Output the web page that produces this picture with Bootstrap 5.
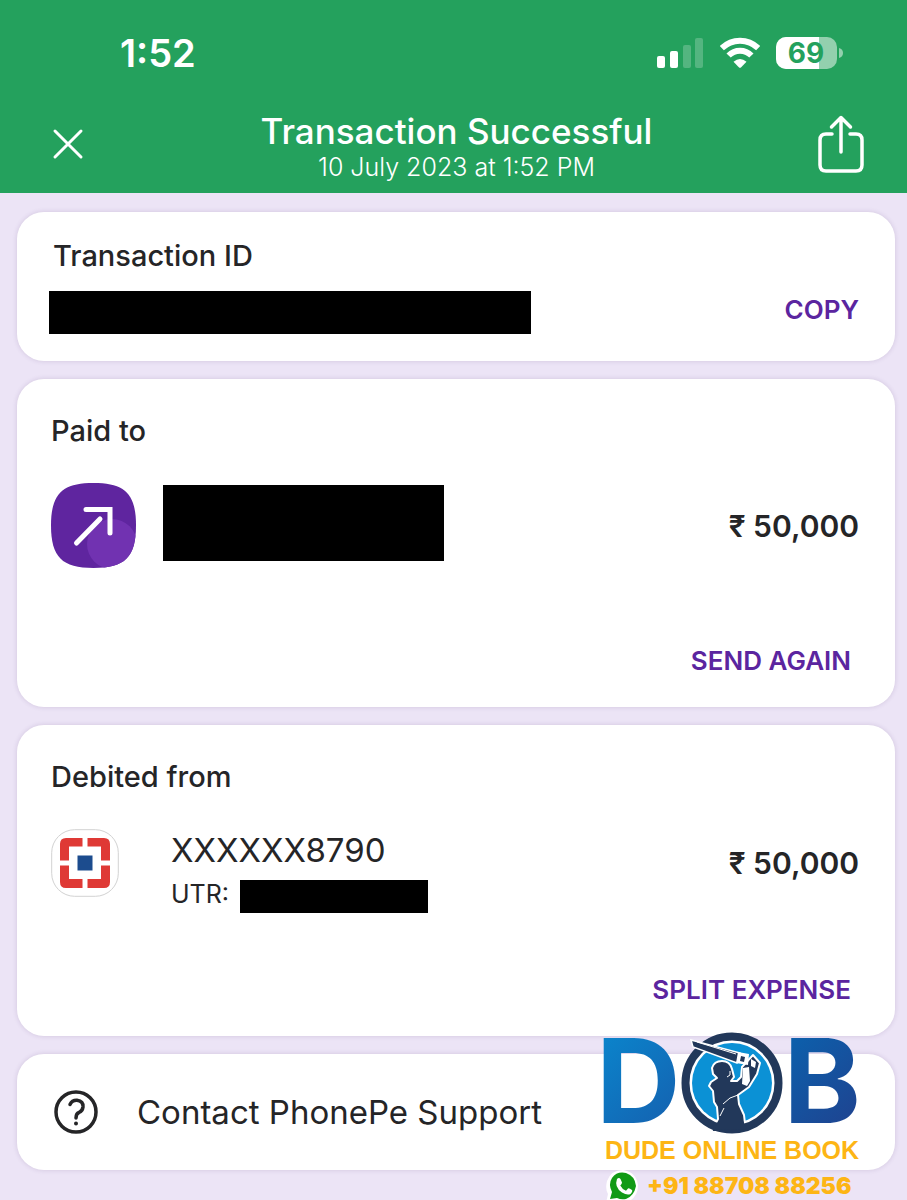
<!DOCTYPE html>
<html lang="en">

<head>
    <meta charset="UTF-8">
    <meta name="viewport" content="width=device-width, initial-scale=1.0">
    <title>Transaction Successful</title>
    <link href="https://cdn.jsdelivr.net/npm/bootstrap@5.3.1/dist/css/bootstrap.min.css" rel="stylesheet">
    <style>
        body {
            font-family: Inter, "Liberation Sans", sans-serif;
            background-color: #ece4f6;
            color: #252527;
        }

        .top-area {
            background-color: #24a15d;
            padding: 32px 42px 8px 52px;
        }

        .status-bar {
            height: 42px;
            padding: 0 21px 0 68px;
        }

        .clock {
            font-size: 38px;
            line-height: 42px;
            font-weight: 600;
        }

        .title-bar {
            margin-top: 38px;
        }

        .bar-button {
            min-width: 44px;
            margin-bottom: 10px;
        }

        .page-title {
            font-size: 35px;
            line-height: 38px;
            font-weight: 500;
        }

        .page-date {
            font-size: 25px;
            line-height: 35px;
            font-weight: 300;
        }

        .content {
            padding: 19px 12px 31px 17px;
            gap: 18px;
        }

        .panel {
            border-radius: 27px;
            box-shadow: 0 0 5px rgba(70, 40, 100, .16);
            padding: 26px 36px;
        }

        .panel-id {
            padding-left: 32px;
            padding-bottom: 27px;
        }

        .panel-tall {
            padding: 34px 36px 28px 34px;
        }

        .panel-support {
            padding: 32px 36px 32px 36px;
        }

        .label-text {
            font-size: 29px;
            line-height: 36px;
            font-weight: 500;
        }

        .amount {
            font-size: 30px;
            line-height: 68px;
            font-weight: 600;
        }

        .action {
            color: #5b259f;
            font-size: 26px;
            line-height: 36px;
            font-weight: 600;
        }

        .redacted {
            background: #000;
        }

        .redacted-id {
            width: 482px;
            height: 43px;
            margin-top: 17px;
        }

        .redacted-name {
            width: 281px;
            height: 76px;
            margin-left: 27px;
            margin-bottom: 5px;
        }

        .redacted-utr {
            width: 188px;
            height: 33px;
            margin-left: 11px;
        }

        .paid-row {
            margin: 34px 0 75px;
        }

        .debit-row {
            margin: 34px 0 59px;
        }

        .account {
            margin-left: 52px;
        }

        .account-number {
            font-size: 33px;
            line-height: 42px;
        }

        .utr {
            font-size: 25px;
            line-height: 28px;
            margin-top: 9px;
        }

        .support-text {
            font-size: 33px;
            line-height: 52px;
            margin-left: 38px;
            color: #252527;
        }

        /* promo badge lies over the last card */
        .promo {
            position: absolute;
            top: -22px;
            right: 34px;
            width: 258px;
            font-family: "Liberation Sans", Arial, sans-serif;
            font-weight: 700;
        }

        .promo-letter {
            font-family: Inter, sans-serif;
            font-size: 117px;
            line-height: 98px;
            color: transparent;
            background-clip: text;
            -webkit-background-clip: text;
        }

        .letter-d {
            background-image: linear-gradient(135deg, #0a86cd, #155fae);
            margin-left: -7px;
        }

        .letter-b {
            background-image: linear-gradient(135deg, #0b62ae, #20418e);
        }

        .promo-emblem {
            flex: none;
        }

        .promo-name {
            color: #fdb515;
            font-size: 25px;
            line-height: 32px;
        }

        .promo-phone {
            font-family: Inter, sans-serif;
            color: #fdb515;
            font-size: 23px;
            line-height: 36px;
            font-weight: 900;
            margin-top: 2px;
        }
    </style>
</head>

<body>
    <header class="top-area text-white">
        <div class="status-bar d-flex justify-content-between align-items-center">
            <span class="clock">1:52</span>
            <div class="d-flex align-items-center">
                <svg width="48" height="32" viewBox="0 0 48 32" fill="#fff" aria-hidden="true">
                    <rect x="1" y="19" width="8" height="12" rx="2" />
                    <rect x="14" y="14" width="8" height="17" rx="2" />
                    <rect x="27" y="8" width="8" height="23" rx="2" opacity=".22" />
                    <rect x="39" y="1" width="8" height="30" rx="2" opacity=".22" />
                </svg>
                <svg class="ms-3" width="40" height="32" viewBox="0 0 40 32" fill="none" stroke="#fff" stroke-width="6" aria-hidden="true">
                    <path d="M1.800 11.200C12 1.200 28 1.200 38.200 11.200" />
                    <path d="M8.600 18.500C15 12 25 12 31.400 18.500" />
                    <path fill="#fff" stroke="none" d="M13.500 24.800Q20 19 26.500 24.800L21.200 30.200Q20 31.200 18.800 30.200Z" />
                </svg>
                <svg class="ms-3" width="68" height="34" viewBox="0 0 68 34" role="img" aria-label="Battery 69">
                    <defs>
                        <clipPath id="batteryShape"><rect x="0" y="1" width="61" height="32" rx="10" /></clipPath>
                    </defs>
                    <g clip-path="url(#batteryShape)">
                        <rect width="61" height="34" fill="#93d0ae" />
                        <rect width="43" height="34" fill="#fff" />
                    </g>
                    <path d="M63 12q4 1 4 5t-4 5z" fill="#93d0ae" />
                    <text x="30" y="27" text-anchor="middle" font-size="28" font-weight="700" fill="#24a15d">69</text>
                </svg>
            </div>
        </div>
        <div class="title-bar d-flex justify-content-between align-items-center">
            <button type="button" class="btn p-0 border-0 bar-button" aria-label="Close">
                <svg class="d-block" width="32" height="32" viewBox="0 0 32 32" stroke="#fff" stroke-width="3" stroke-linecap="round">
                    <path d="M3 3L29 29M29 3L3 29" />
                </svg>
            </button>
            <div class="text-center">
                <h1 class="page-title mb-0">Transaction Successful</h1>
                <div class="page-date">10 July 2023 at 1:52 PM</div>
            </div>
            <button type="button" class="btn p-0 border-0 bar-button" aria-label="Share">
                <svg class="d-block" width="48" height="60" viewBox="0 0 48 60" fill="none" stroke="#fff" stroke-width="3.500" stroke-linecap="round" stroke-linejoin="round">
                    <path d="M15 20H9Q3 20 3 26V51Q3 57 9 57H39Q45 57 45 51V26Q45 20 39 20H33" />
                    <path d="M24 38V4M14.500 13L24 3.500L33.500 13" />
                </svg>
            </button>
        </div>
    </header>

    <main class="content d-flex flex-column">
        <section class="card border-0 panel panel-id">
            <div class="d-flex justify-content-between align-items-center">
                <div>
                    <h2 class="label-text mb-0 ps-1">Transaction ID</h2>
                    <div class="redacted redacted-id"></div>
                </div>
                <button type="button" class="btn p-0 border-0 action mt-5">COPY</button>
            </div>
        </section>

        <section class="card border-0 panel panel-tall">
            <h2 class="label-text mb-0">Paid to</h2>
            <div class="paid-row d-flex align-items-center">
                <svg width="85" height="85" viewBox="0 0 85 85" aria-hidden="true">
                    <defs>
                        <clipPath id="tileShape">
                            <path d="M42.500 0C74 0 85 11 85 42.500S74 85 42.500 85S0 74 0 42.500S11 0 42.500 0Z" />
                        </clipPath>
                    </defs>
                    <g clip-path="url(#tileShape)">
                        <rect width="85" height="85" fill="#5f259f" />
                        <circle cx="61" cy="61" r="25" fill="#7132b1" />
                    </g>
                    <path d="M35 26.500H59V50" fill="none" stroke="#fff" stroke-width="5" stroke-linecap="round" />
                    <path d="M25.500 60L49 36" stroke="#fff" stroke-width="5" stroke-linecap="round" />
                </svg>
                <div class="redacted redacted-name"></div>
                <span class="amount ms-auto">₹ 50,000</span>
            </div>
            <button type="button" class="btn p-0 border-0 action align-self-end me-2">SEND AGAIN</button>
        </section>

        <section class="card border-0 panel panel-tall">
            <h2 class="label-text mb-0">Debited from</h2>
            <div class="debit-row d-flex align-items-start">
                <svg width="68" height="68" viewBox="0 0 68 68" aria-hidden="true">
                    <rect x=".7" y=".7" width="66.600" height="66.600" rx="23" fill="#fff" stroke="#d2d2d2" />
                    <path fill="#df3935" d="M15 9H31.500V17.500H18V31.500H9V15Q9 9 15 9ZM36.500 9H53Q59 9 59 15V31.500H50V17.500H36.500ZM9 36.500H18V50H31.500V59H15Q9 59 9 53ZM50 36.500H59V53Q59 59 53 59H36.500V50H50Z" />
                    <rect x="26.500" y="26.500" width="15" height="15" fill="#1c4c8e" />
                </svg>
                <div class="account">
                    <div class="account-number">XXXXXX8790</div>
                    <div class="utr d-flex align-items-start">
                        <span>UTR:</span>
                        <div class="redacted redacted-utr"></div>
                    </div>
                </div>
                <span class="amount ms-auto">₹ 50,000</span>
            </div>
            <button type="button" class="btn p-0 border-0 action align-self-end me-2">SPLIT EXPENSE</button>
        </section>

        <section class="card border-0 panel panel-support">
            <a href="#" class="d-flex align-items-center text-decoration-none">
                <svg width="46" height="46" viewBox="0 0 46 46" fill="none" stroke="#252527" stroke-width="3.500" stroke-linecap="round" stroke-linejoin="round" aria-hidden="true">
                    <circle cx="23" cy="23" r="20" />
                    <path d="M17 15.500Q19 11 24 11.200Q30.500 12 30 18Q29.500 22 26 23.500Q23 24.600 23 29" />
                    <circle cx="23" cy="34.500" r="2" fill="#252527" stroke="none" />
                </svg>
                <span class="support-text">Contact PhonePe Support</span>
            </a>
            <div class="promo">
                <div class="d-flex justify-content-between align-items-start">
                    <span class="promo-letter letter-d">D</span>
                    <svg class="promo-emblem" width="102" height="102" viewBox="0 0 102 102" aria-hidden="true">
                        <circle cx="51" cy="51" r="46" fill="#fff" />
                        <circle cx="51" cy="51" r="40" fill="#0b91d5" />
                        <!-- batsman -->
                        <path fill="#22385a" stroke="#fff" stroke-width="2" stroke-linejoin="round" d="M30 100L37 87L36 75L33 70L32 59L28 54L30 50L36 46L32 42L31 36Q33 29 41 29Q49 29 51 37L53 45L50 49L56 49L60 45L61 35L72 23L79 31L76 42L68 55L57 63L58 72L63 83L65 100Z" />
                        <circle cx="51" cy="51" r="46.500" fill="none" stroke="#22385a" stroke-width="8" />
                        <path fill="#22385a" d="M33 98L40 85H60L66 97Z" />
                        <!-- bat and gloves -->
                        <path fill="#22385a" stroke="#fff" stroke-width="1.500" d="M10 8L59 21L56 31L12 15Z" />
                        <path fill="#fff" d="M57 20L68 22L67 33L55 31ZM62 36L68 35L69 49L66 54L61 52ZM70 27L75 30L74 36L70 34Z" />
                        <path fill="#22385a" d="M60 24L64 25L63 30L59 29Z" />
                        <path fill="none" stroke="#fff" d="M16 10L55 22M42 72L49 66L57 63M39 84L43 76M49 39V43L46 45" />
                    </svg>
                    <span class="promo-letter letter-b">B</span>
                </div>
                <div class="promo-name text-center text-nowrap">DUDE ONLINE BOOK</div>
                <div class="promo-phone d-flex align-items-center text-nowrap">
                    <svg class="me-2" width="36" height="34" viewBox="0 0 36 34" aria-hidden="true">
                        <path fill="#fff" d="M3 34L5 25Q2 20 4 12Q8 1 20 1Q33 3 35 16Q35 28 25 33H12Z" />
                        <path fill="#119a16" d="M7 30L9 23Q5 15 9 9Q14 2 23 4Q32 7 33 17Q31 27 23 30Q18 31 14 29Z" />
                        <path fill="#fff" d="M14 10Q16 8 17.500 10L19 13.500Q19 15 17.300 16.500Q19 20 23 21.700L25 19.500Q26 18.800 29 21Q30 22 27.500 25Q24 26.500 19 23.500Q11 18 14 10Z" />
                    </svg>
                    <span>+91 88708 88256</span>
                </div>
            </div>
        </section>
    </main>

    <script src="https://cdn.jsdelivr.net/npm/bootstrap@5.3.1/dist/js/bootstrap.bundle.min.js"></script>
</body>

</html>
